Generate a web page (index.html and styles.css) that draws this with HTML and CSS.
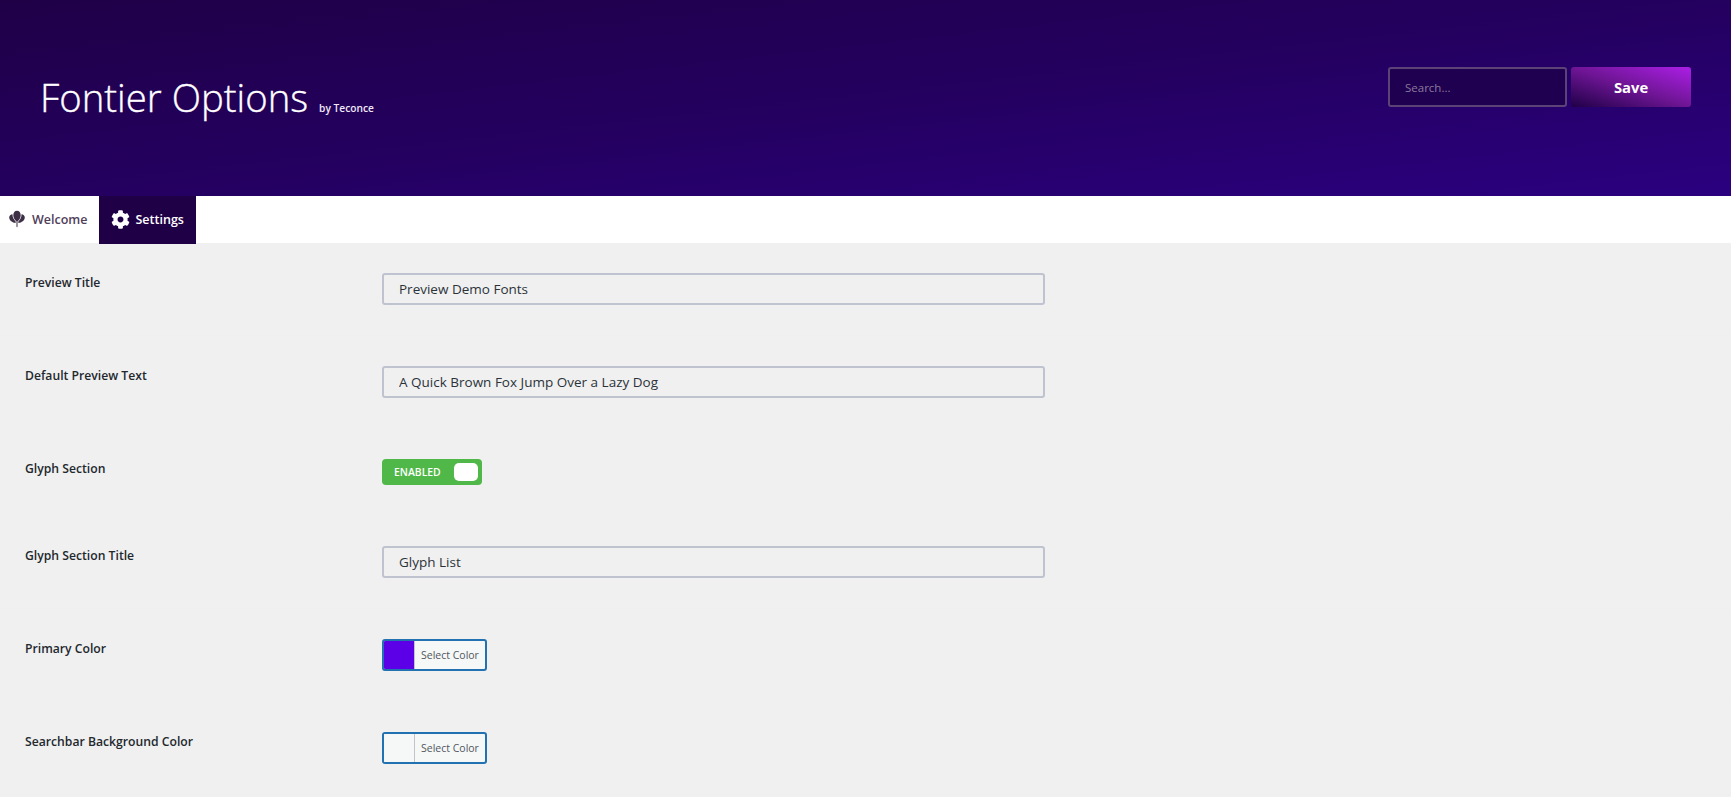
FILE: index.html
```html
<!DOCTYPE html>
<html lang="en">
<head>
<meta charset="utf-8">
<title>Fontier Options</title>
<link rel="stylesheet" href="styles.css">
</head>
<body>
<header class="hero">
  <div class="brand">
    <h1 class="brand-title">Fontier Options</h1>
    <span class="brand-by">by Teconce</span>
  </div>
  <div class="actions">
    <input class="search" type="text" placeholder="Search...">
    <button class="save" type="button">Save</button>
  </div>
</header>
<nav class="tabs">
  <a class="tab">
    <svg class="tab-icon" viewBox="0 0 16 18" width="16" height="18" aria-hidden="true">
      <path d="M8 .8c2.300 0 3.700 2 3.700 4.400 0 2.600-1.400 4.700-3.200 6v5.400c0 .7-1 .7-1 0v-5.400c-1.800-1.300-3.200-3.400-3.200-6C4.300 2.800 5.700.8 8 .8z"/>
      <path d="M3.500 4.200c-.1 3 1.200 5.500 3.200 7.400l-.1 1.300C3.400 12.600.2 10.200.2 7.400.2 5.500 1.700 4.300 3.500 4.200z"/>
      <path d="M12.500 4.200c.1 3-1.200 5.500-3.200 7.400l.1 1.300c3.200-.3 6.400-2.700 6.400-5.500 0-1.900-1.500-3.100-3.300-3.200z"/>
    </svg>
    <span>Welcome</span>
  </a>
  <a class="tab tab-active">
    <svg class="tab-icon" viewBox="0 0 512 512" width="19" height="19" aria-hidden="true">
      <path d="M487.400 315.700l-42.600-24.600c4.300-23.200 4.300-47 0-70.200l42.600-24.600c4.900-2.800 7.100-8.600 5.500-14-11.100-35.600-30-67.800-54.700-94.600-3.800-4.100-10-5.100-14.800-2.300L380.800 110c-17.900-15.400-38.500-27.300-60.800-35.100V25.800c0-5.600-3.900-10.500-9.400-11.700-36.700-8.200-74.300-7.800-109.200 0-5.500 1.200-9.400 6.100-9.400 11.700V75c-22.200 7.900-42.800 19.800-60.800 35.100L88.700 85.500c-4.900-2.800-11-1.900-14.800 2.300-24.700 26.700-43.600 58.900-54.700 94.600-1.700 5.400.6 11.200 5.500 14L67.300 221c-4.300 23.200-4.300 47 0 70.200l-42.600 24.600c-4.900 2.800-7.100 8.600-5.500 14 11.100 35.600 30 67.800 54.700 94.600 3.800 4.100 10 5.100 14.800 2.300l42.600-24.600c17.900 15.400 38.500 27.300 60.800 35.100v49.200c0 5.600 3.900 10.500 9.400 11.700 36.700 8.200 74.300 7.800 109.200 0 5.500-1.200 9.400-6.100 9.400-11.700v-49.200c22.200-7.900 42.800-19.800 60.800-35.100l42.600 24.600c4.900 2.800 11 1.900 14.800-2.300 24.700-26.700 43.600-58.900 54.700-94.600 1.500-5.500-.7-11.300-5.600-14.100zM256 336c-44.100 0-80-35.900-80-80s35.900-80 80-80 80 35.900 80 80-35.900 80-80 80z"/>
    </svg>
    <span>Settings</span>
  </a>
</nav>
<main class="form">
  <section class="row">
    <label class="row-label">Preview Title</label>
    <input class="field" type="text" value="Preview Demo Fonts">
  </section>
  <section class="row">
    <label class="row-label">Default Preview Text</label>
    <input class="field" type="text" value="A Quick Brown Fox Jump Over a Lazy Dog">
  </section>
  <section class="row row-toggle">
    <label class="row-label">Glyph Section</label>
    <div class="toggle"><span class="toggle-text">ENABLED</span><span class="toggle-knob"></span></div>
  </section>
  <section class="row row-after-toggle">
    <label class="row-label">Glyph Section Title</label>
    <input class="field" type="text" value="Glyph List">
  </section>
  <section class="row">
    <label class="row-label">Primary Color</label>
    <button class="color" type="button"><span class="swatch swatch-primary"></span><span class="color-text">Select Color</span></button>
  </section>
  <section class="row">
    <label class="row-label">Searchbar Background Color</label>
    <button class="color" type="button"><span class="swatch"></span><span class="color-text">Select Color</span></button>
  </section>
</main>
</body>
</html>
```
FILE: styles.css
```css
* { box-sizing: border-box; }
html, body { margin: 0; padding: 0; height: 797px; overflow: hidden; }
body { background: #f0f0f1; font-family: "Open Sans", "Noto Sans", sans-serif; color: #2c3338; }

.hero {
  height: 196px;
  display: flex;
  justify-content: space-between;
  align-items: flex-start;
  padding: 67px 40px 0 40px;
  background: linear-gradient(to bottom right, #1f0047 0%, #24005f 50%, #2b0080 100%);
}
.brand { display: flex; align-items: baseline; gap: 11px; margin-top: 7px; }
.brand-title { margin: 0; font-size: 38.300px; font-weight: 300; line-height: 46px; color: #fff; -webkit-text-stroke: .35px #fff; }
.brand-by { font-size: 10.200px; font-weight: 600; color: #f0e8f6; }
.actions { display: flex; gap: 4px; }
.search {
  width: 179px; height: 40px;
  padding: 0 15px;
  border: 2px solid #5b4378;
  border-radius: 3px;
  background: #1f0050;
  color: #fff;
  font: 400 11.500px "Open Sans", sans-serif;
  outline: none;
}
.search::placeholder { color: #8a7a9c; opacity: 1; }
.save {
  width: 120px; height: 40px;
  border: 0; border-radius: 3px;
  background: linear-gradient(to top right, #1f0047 0%, #6f1595 50%, #ac1fe6 100%);
  color: #fff;
  font: 700 14.800px "Open Sans", sans-serif;
}

.tabs { height: 47px; display: flex; align-items: flex-start; background: #fff; }
.tab {
  height: 48px;
  display: flex; align-items: center; gap: 7px;
  padding: 0 0 2px 9px;
  font-size: 12.500px; font-weight: 600; color: #50405a;
  width: 99px;
}
.tab-icon { fill: #3d2f45; flex: none; }
.tab-active { background: #1f0047; color: #fff; width: 97px; padding-left: 11.500px; gap: 6px; }
.tab-active .tab-icon { fill: #fff; }

.form { padding: 0 25px; }
.row {
  display: flex;
  align-items: flex-start;
  height: 93px;
  padding-top: 30px;
  margin: 0 -25px;
  padding-left: 25px;
  border-bottom: 1px solid #efeff0;
}
.row-toggle { height: 86px; }
.row-after-toggle { height: 94px; padding-top: 31px; }
.row-label { width: 357px; flex: none; margin-top: 1px; font-size: 12.200px; font-weight: 600; color: #23282d; line-height: 18px; }
.field {
  width: 663px; height: 32px;
  padding: 0 15px 1px;
  border: 2px solid #bfc3cf;
  border-radius: 3px;
  background: #f0f0f1;
  font: 400 13.500px "Open Sans", sans-serif;
  color: #2c3338;
  outline: none;
}
.toggle {
  width: 100px; height: 26px;
  display: flex; align-items: center; justify-content: space-between;
  padding: 0 4px 0 12px;
  border-radius: 4px;
  background: #4fb848;
}
.toggle-text { font-size: 10.400px; font-weight: 600; color: #fff; }
.toggle-knob { width: 24px; height: 18px; border-radius: 5px; background: #fff; }
.color {
  width: 105px; height: 32px;
  display: flex; align-items: stretch;
  padding: 0;
  border: 2px solid #2271b1;
  border-radius: 3px;
  background: #f6f7f7;
  overflow: hidden;
}
.swatch { flex: 0 0 31px; border-right: 1px solid #c3c4c7; background: #f6f7f7; }
.swatch-primary { background: #5c00e8; }
.color-text { flex: 1; font: 400 10.500px/28px "Open Sans", sans-serif; color: #50575e; text-align: left; padding-left: 6px; white-space: nowrap; }
```
